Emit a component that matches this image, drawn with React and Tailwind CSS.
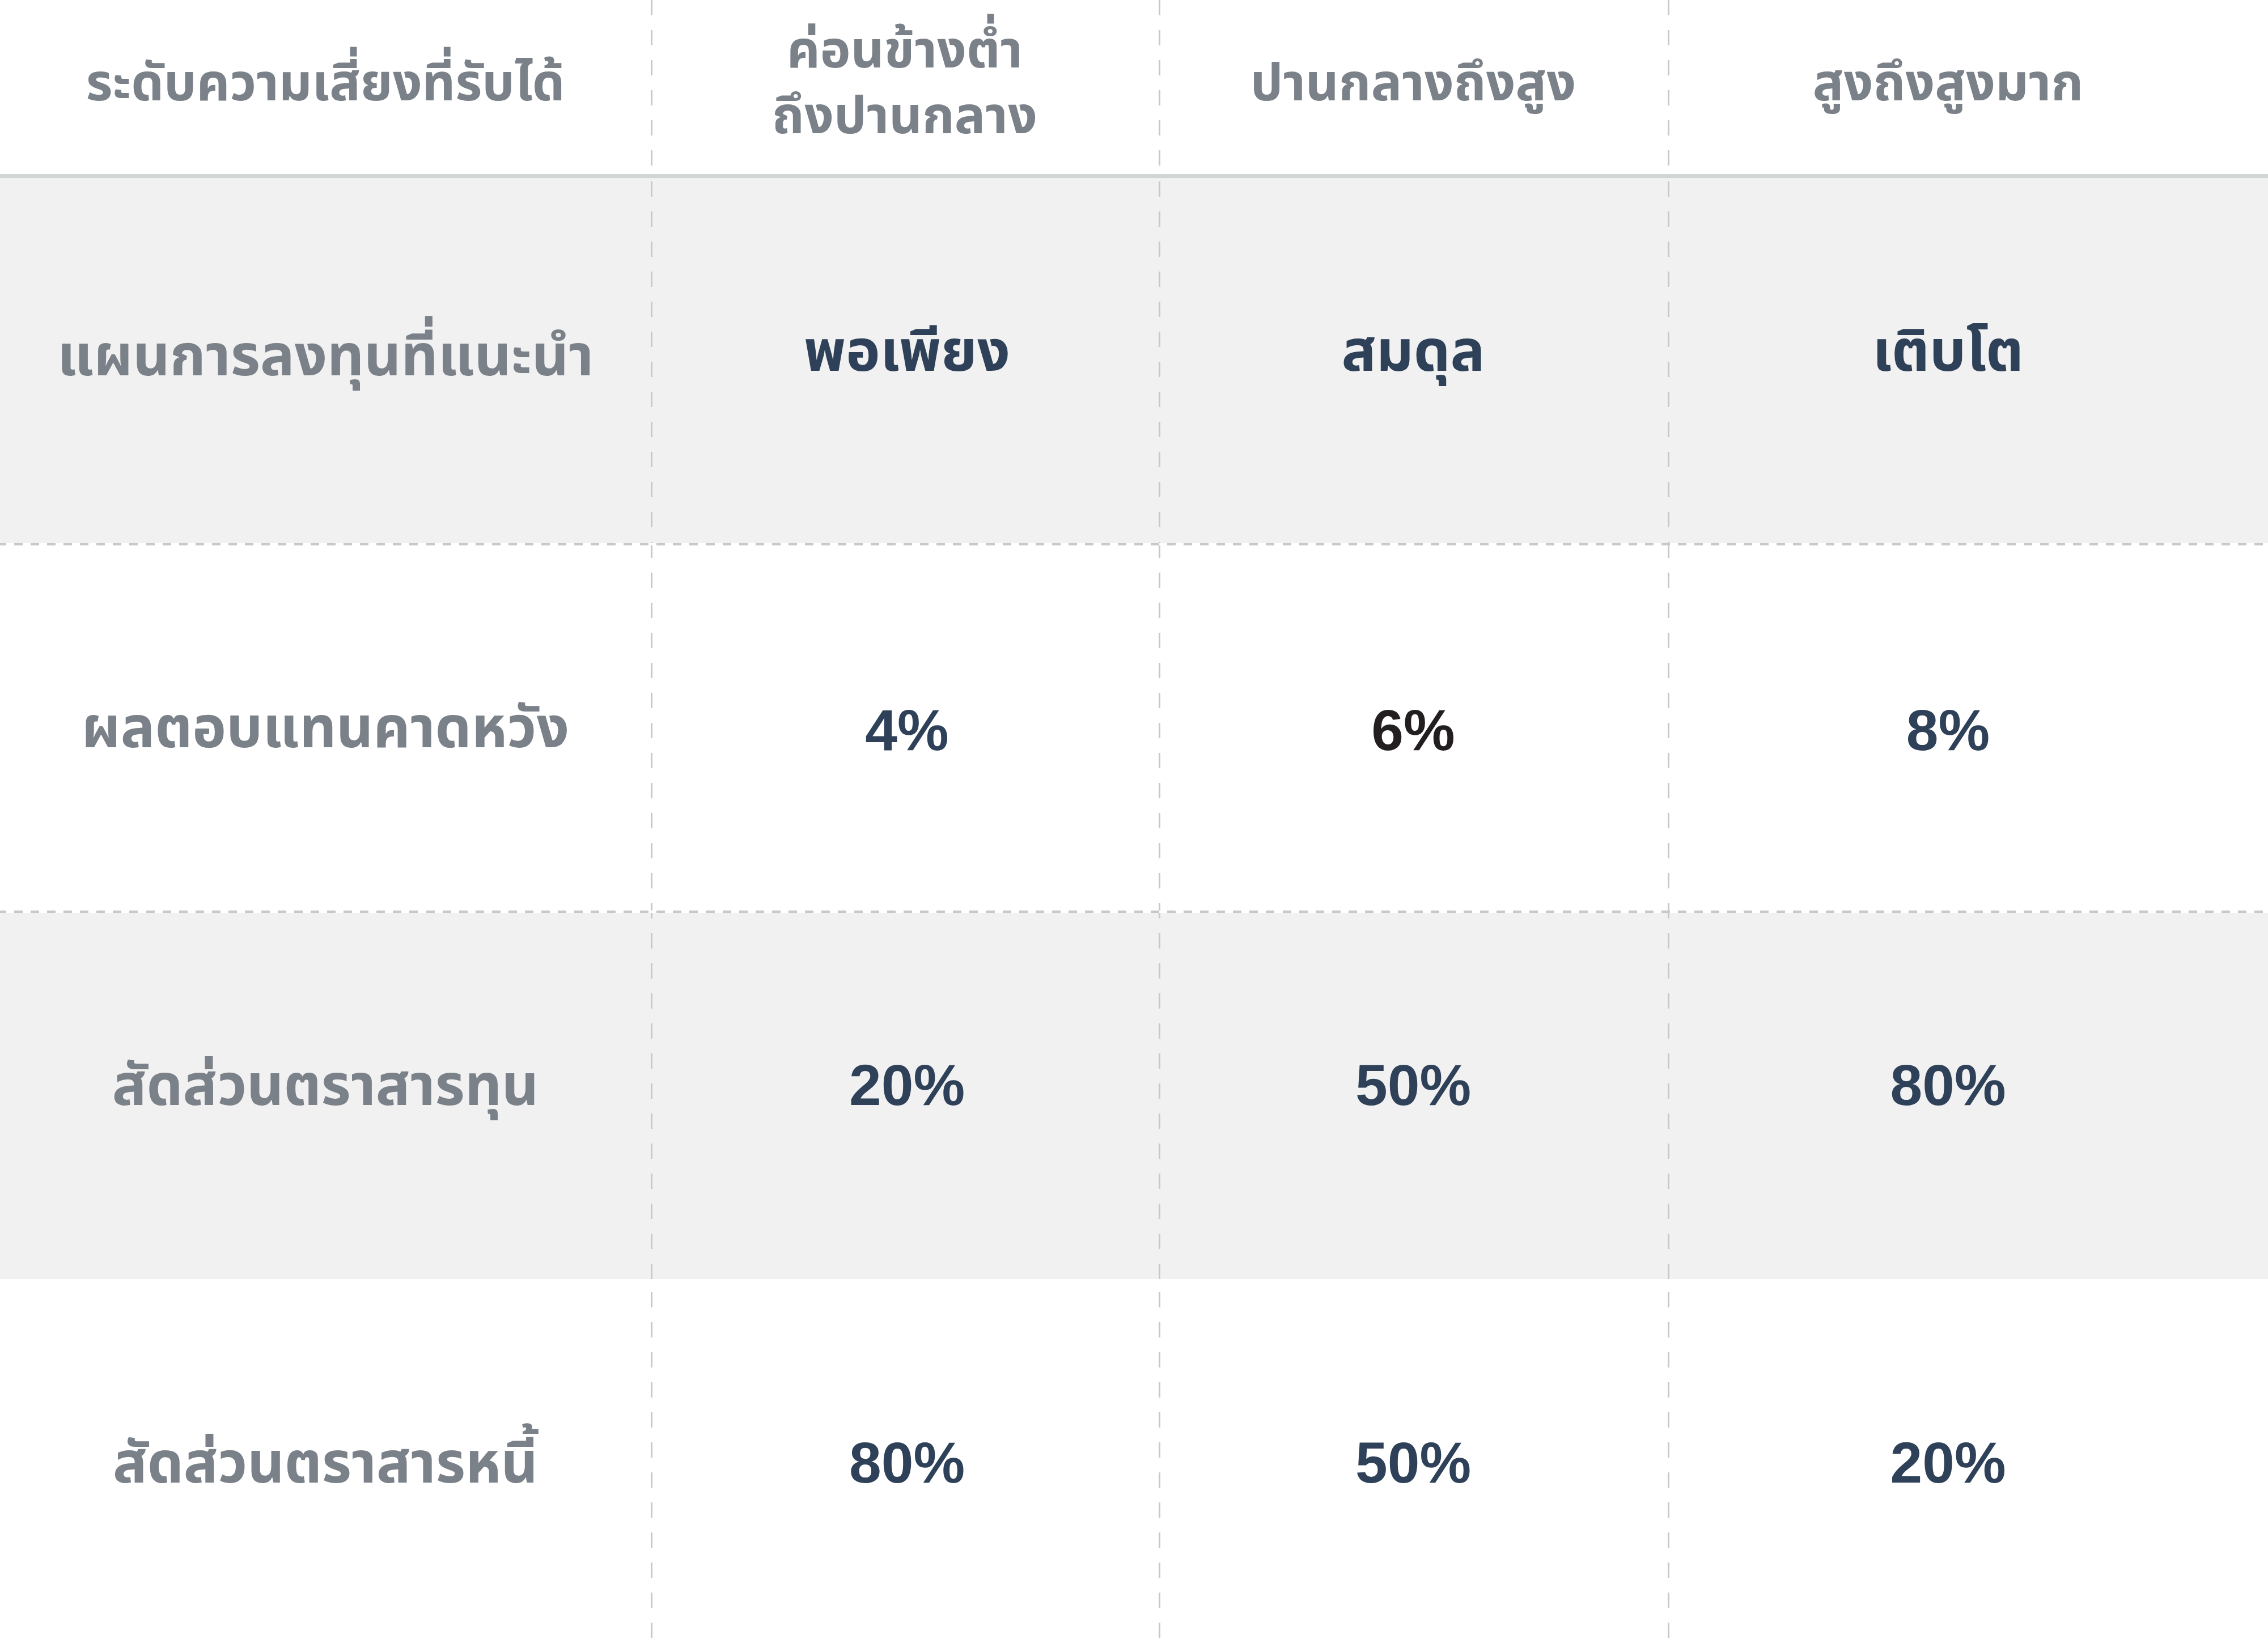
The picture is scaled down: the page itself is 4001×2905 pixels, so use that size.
const NAVY = "text-[#2e4159]";

const HEADERS = [
  { text: "ระดับความเสี่ยงที่รับได้" },
  { text: "ค่อนข้างต่ำ\nถึงปานกลาง" },
  { text: "ปานกลางถึงสูง" },
  { text: "สูงถึงสูงมาก" },
];

const ROWS = [
  {
    label: "แผนการลงทุนที่แนะนำ",
    values: [
      { text: "พอเพียง", color: NAVY },
      { text: "สมดุล", color: NAVY },
      { text: "เติบโต", color: NAVY },
    ],
    row: "h-[644px] bg-[#f1f1f1]",
    phase: "bg-[position:0_6px]",
    labelPad: "pb-[16px]",
    valuePad: "pb-[34px]",
  },
  {
    label: "ผลตอบแทนคาดหวัง",
    values: [
      { text: "4%", color: NAVY },
      { text: "6%", color: "text-[#231f20]" },
      { text: "8%", color: NAVY },
    ],
    // dashed top/bottom rules: 15px dash, 14px gap
    row: "h-[652px] bg-white border-y-4 border-solid [border-image:repeating-linear-gradient(to_right,#c8c8c8_0_15px,transparent_15px_29px)_4]",
    phase: "bg-[position:0_48px]",
    labelPad: "",
    valuePad: "pt-[8px]",
  },
  {
    label: "สัดส่วนตราสารทุน",
    values: [
      { text: "20%", color: NAVY },
      { text: "50%", color: NAVY },
      { text: "80%", color: NAVY },
    ],
    row: "h-[646px] bg-[#f1f1f1]",
    phase: "bg-[position:0_36px]",
    labelPad: "pb-[36px]",
    valuePad: "pb-[38px]",
  },
  {
    label: "สัดส่วนตราสารหนี้",
    values: [
      { text: "80%", color: NAVY },
      { text: "50%", color: NAVY },
      { text: "20%", color: NAVY },
    ],
    row: "h-[649px] bg-white",
    phase: "bg-[position:0_23px]",
    labelPad: "",
    valuePad: "",
  },
];

// dashed column divider, drawn as a background on cells of columns 2-4
const DIVIDER =
  "bg-[linear-gradient(to_bottom,#c8c8c8_27px,transparent_27px)] bg-[length:3px_53px] bg-repeat-y";

function Row({ label, values, row, phase, labelPad, valuePad }) {
  return (
    <div className={`grid grid-cols-[1148px_896px_898px_1fr] ${row}`}>
      <div className={`flex items-center justify-center text-[101px] font-bold text-[#7b8189] ${labelPad}`}>
        {label}
      </div>
      {values.map((v, i) => (
        <div
          key={i}
          className={`flex items-center justify-center text-[102px] font-bold ${v.color} ${DIVIDER} ${phase} ${valuePad} ${
            i === 0 ? "pl-[8px]" : ""
          } ${i === 2 ? "pr-[70px]" : ""}`}
        >
          {v.text}
        </div>
      ))}
    </div>
  );
}

export default function App() {
  return (
    <div className="w-[4001px] h-[2905px] overflow-hidden bg-white font-['Liberation_Sans','Noto_Sans_Thai','Noto_Sans',sans-serif]">
      {/* header */}
      <div className="grid grid-cols-[1148px_896px_898px_1fr] h-[314px] border-b-[7px] border-[#d1d5d6] bg-white">
        {HEADERS.map((h, i) => (
          <div
            key={i}
            className={`flex items-center justify-center pb-[16px] text-center whitespace-pre-line text-[91px] leading-[116px] font-bold text-[#7b8189] ${
              i > 0 ? `${DIVIDER} bg-[position:0_0]` : ""
            } ${i === 3 ? "pr-[70px]" : ""}`}
          >
            {h.text}
          </div>
        ))}
      </div>
      {ROWS.map((r, i) => (
        <Row key={i} {...r} />
      ))}
    </div>
  );
}
